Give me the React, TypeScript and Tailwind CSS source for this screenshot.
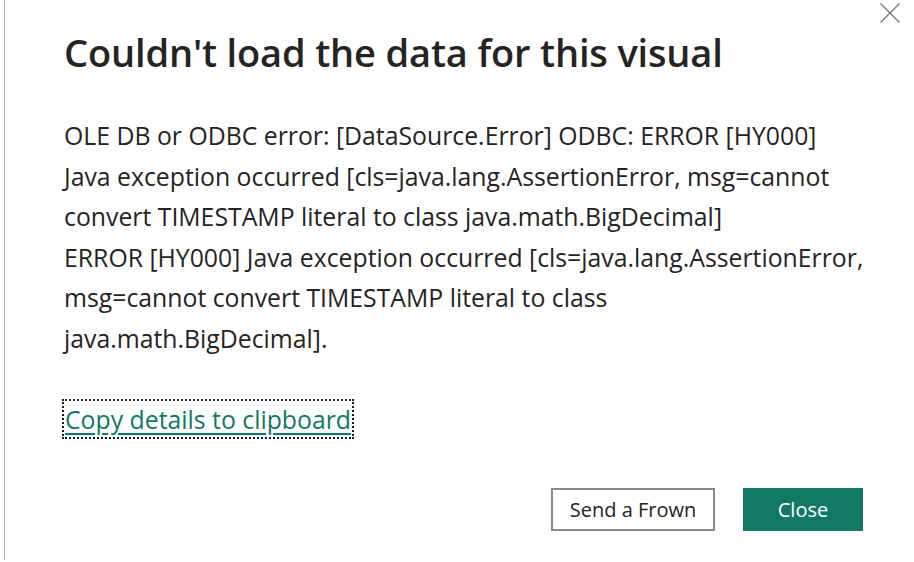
const lines = [
  "OLE DB or ODBC error: [DataSource.Error] ODBC: ERROR [HY000]",
  "Java exception occurred [cls=java.lang.AssertionError, msg=cannot",
  "convert TIMESTAMP literal to class java.math.BigDecimal]",
  "ERROR [HY000] Java exception occurred [cls=java.lang.AssertionError,",
  "msg=cannot convert TIMESTAMP literal to class",
  "java.math.BigDecimal].",
];

export default function App() {
  return (
    <div
      className="w-[914px] h-[562px] bg-white flex overflow-hidden"
      style={{ fontFamily: '"Open Sans", "Noto Sans", sans-serif' }}
    >
      <div className="ml-[4px] w-px h-[560px] bg-[#b3b3b3]" />
      <div className="flex-1 min-w-0 relative flex flex-col pl-[59px] pr-[51px]">
        {/* close icon */}
        <button className="absolute right-[13px] top-[2px] w-[22px] h-[22px]">
          <svg width="22" height="22" viewBox="0 0 22 22" fill="none">
            <path d="M1.5 1.5L20.5 20.5M20.5 1.5L1.5 20.5" stroke="#7a7a7a" strokeWidth="1.4" />
          </svg>
        </button>

        <h1 className="mt-[28px] text-[38px] leading-[48px] font-semibold text-[#252423] tracking-[-0.15px] whitespace-nowrap">
          Couldn't load the data for this visual
        </h1>

        <div className="mt-[39px] text-[24.8px] leading-[40.5px] text-[#252423]">
          {lines.map((l) => (
            <div key={l} className="whitespace-nowrap">
              {l}
            </div>
          ))}
        </div>

        <div className="mt-[43px] flex">
          <a className="px-px py-[4px] outline-dotted outline-2 outline-[#1a1a1a] text-[24.8px] leading-[28px] text-[#117865] underline underline-offset-[4px] cursor-pointer whitespace-nowrap">
            Copy details to clipboard
          </a>
        </div>

        <div className="mt-[51px] flex justify-end gap-[28px]">
          <button className="w-[164px] h-[43px] border-2 border-[#8a8a8a] text-[20px] text-[#252423] bg-white">
            Send a Frown
          </button>
          <button className="w-[120px] h-[43px] bg-[#117865] text-[20px] text-white">
            Close
          </button>
        </div>
      </div>
    </div>
  );
}
